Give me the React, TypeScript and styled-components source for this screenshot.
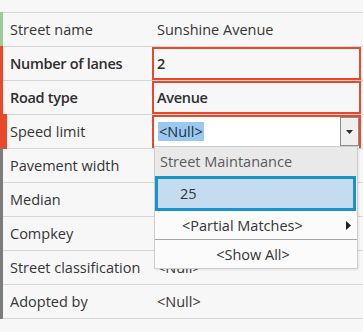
import React from "react";
import styled, { createGlobalStyle } from "styled-components";

const GlobalStyle = createGlobalStyle`
  html, body {
    margin: 0;
    background: #f7f7f7;
    font-family: "Open Sans", "Noto Sans", sans-serif;
    font-size: 14.5px;
    color: #353535;
  }
`;

type Status = "ok" | "error" | "none";

const markerColors: Record<Status, string> = {
  ok: "#9ccc98",
  error: "#e8492a",
  none: "#7c7c7c",
};

const Table = styled.div`
  padding-top: 12px;
  width: 363px;
`;

const Row = styled.div<{ $marker: number }>`
  display: grid;
  grid-template-columns: ${(p) => `${p.$marker}px ${150 - p.$marker}px 1fr`};
  height: 34px;
  position: relative;
`;

const Marker = styled.div<{ $status: Status }>`
  background: ${(p) => markerColors[p.$status]};
  margin-bottom: -1px;
  position: relative;
  z-index: 1;
`;

const Label = styled.div<{ $pad: number; $strong: boolean }>`
  display: flex;
  align-items: center;
  padding-left: ${(p) => p.$pad}px;
  border-top: 1px solid #d6d6d6;
  white-space: nowrap;
  overflow: hidden;
  font-weight: ${(p) => (p.$strong ? 600 : 400)};
  letter-spacing: ${(p) => (p.$strong ? "-0.3px" : "0")};
  color: ${(p) => (p.$strong ? "#2e2e2e" : "#353535")};
`;

const Value = styled.div`
  display: flex;
  align-items: center;
  padding-left: 7px;
  border-top: 1px solid #d6d6d6;
  position: relative;
  white-space: nowrap;
`;

const BottomLine = styled.div`
  margin-left: 3px;
  border-top: 1px solid #d6d6d6;
`;

const ErrorBox = styled.div`
  flex: 1;
  align-self: stretch;
  margin: 0 2px 0 -5px;
  border: 2px solid #e8492a;
  display: flex;
  align-items: center;
  padding-left: 3px;
  font-weight: 600;
  letter-spacing: -0.3px;
  color: #2e2e2e;
`;

const ComboBox = styled.div`
  flex: 1;
  align-self: stretch;
  margin: 0 2px -1px -5px;
  border: 2px solid #e8492a;
  border-bottom: none;
  padding: 0 0 2px 1px;
  display: flex;
`;

const ComboInput = styled.div`
  flex: 1;
  background: #fff;
  border-bottom: 1px solid #cfcfcf;
  display: flex;
  align-items: center;
  padding-left: 3px;
`;

const Selected = styled.span`
  background: #99c9ef;
  color: #1e2f45;
  padding: 0 1px;
  line-height: 19px;
`;

const DropButton = styled.div`
  width: 17px;
  margin-bottom: 1px;
  border: 1px solid #8d8d8d;
  background: #efefef;
  display: flex;
  align-items: center;
  justify-content: center;
`;

const Popup = styled.div`
  position: absolute;
  top: 31px;
  left: 4px;
  width: 202px;
  border: 1px solid #cdcdcd;
  background: #fbfbfb;
  z-index: 5;
  box-shadow: 1px 1px 2px rgba(0, 0, 0, 0.08);
`;

const PopupHeader = styled.div`
  height: 29px;
  background: #e9e9e9;
  color: #5a5a5a;
  display: flex;
  align-items: center;
  padding-left: 5px;
`;

const PopupItem = styled.div<{ $selected?: boolean; $center?: boolean }>`
  height: ${(p) => (p.$selected ? "29px" : "28px")};
  display: flex;
  align-items: center;
  justify-content: ${(p) => (p.$center ? "center" : "flex-start")};
  padding-left: ${(p) => (p.$center ? 0 : p.$selected ? 22 : 27)}px;
  padding-right: 6px;
  background: ${(p) => (p.$selected ? "#c5dcf0" : "transparent")};
  border: ${(p) => (p.$selected ? "3px solid #1a93c9" : "none")};
  margin: ${(p) => (p.$selected ? "0 1px 0 0" : "0")};
`;

const PopupSeparator = styled.div`
  border-top: 1px solid #a3a3a3;
`;

const Spacer = styled.span`
  flex: 1;
`;

const Arrow = () => (
  <svg width="5" height="9" viewBox="0 0 5 9">
    <path d="M0 0 L5 4.5 L0 9 Z" fill="#1f1f1f" />
  </svg>
);

const Caret = () => (
  <svg width="7" height="4" viewBox="0 0 7 4">
    <path d="M0 0 L7 0 L3.5 4 Z" fill="#2a2a2a" />
  </svg>
);

interface Field {
  label: string;
  value: string;
  status: Status;
  kind?: "error" | "combo";
}

const fields: Field[] = [
  { label: "Street name", value: "Sunshine Avenue", status: "ok" },
  { label: "Number of lanes", value: "2", status: "error", kind: "error" },
  { label: "Road type", value: "Avenue", status: "error", kind: "error" },
  { label: "Speed limit", value: "<Null>", status: "error", kind: "combo" },
  { label: "Pavement width", value: "", status: "none" },
  { label: "Median", value: "", status: "none" },
  { label: "Compkey", value: "", status: "none" },
  { label: "Street classification", value: "<Null>", status: "none" },
  { label: "Adopted by", value: "<Null>", status: "none" },
];

const renderValue = (f: Field) => {
  if (f.kind === "error") return <ErrorBox>{f.value}</ErrorBox>;
  if (f.kind === "combo")
    return (
      <>
        <ComboBox>
          <ComboInput>
            <Selected>{f.value}</Selected>
          </ComboInput>
          <DropButton>
            <Caret />
          </DropButton>
        </ComboBox>
        <Popup>
          <PopupHeader>Street Maintanance</PopupHeader>
          <PopupItem $selected>25</PopupItem>
          <PopupItem>
            &lt;Partial Matches&gt;
            <Spacer />
            <Arrow />
          </PopupItem>
          <PopupSeparator />
          <PopupItem $center>&lt;Show All&gt;</PopupItem>
        </Popup>
      </>
    );
  return f.value;
};

export default function App() {
  return (
    <>
      <GlobalStyle />
      <Table>
        {fields.map((f) => {
          const marker = f.kind === "combo" ? 7 : 3;
          return (
            <Row key={f.label} $marker={marker}>
              <Marker $status={f.status} />
              <Label $pad={10 - marker} $strong={f.kind === "error"}>
                {f.label}
              </Label>
              <Value>{renderValue(f)}</Value>
            </Row>
          );
        })}
        <BottomLine />
      </Table>
    </>
  );
}
